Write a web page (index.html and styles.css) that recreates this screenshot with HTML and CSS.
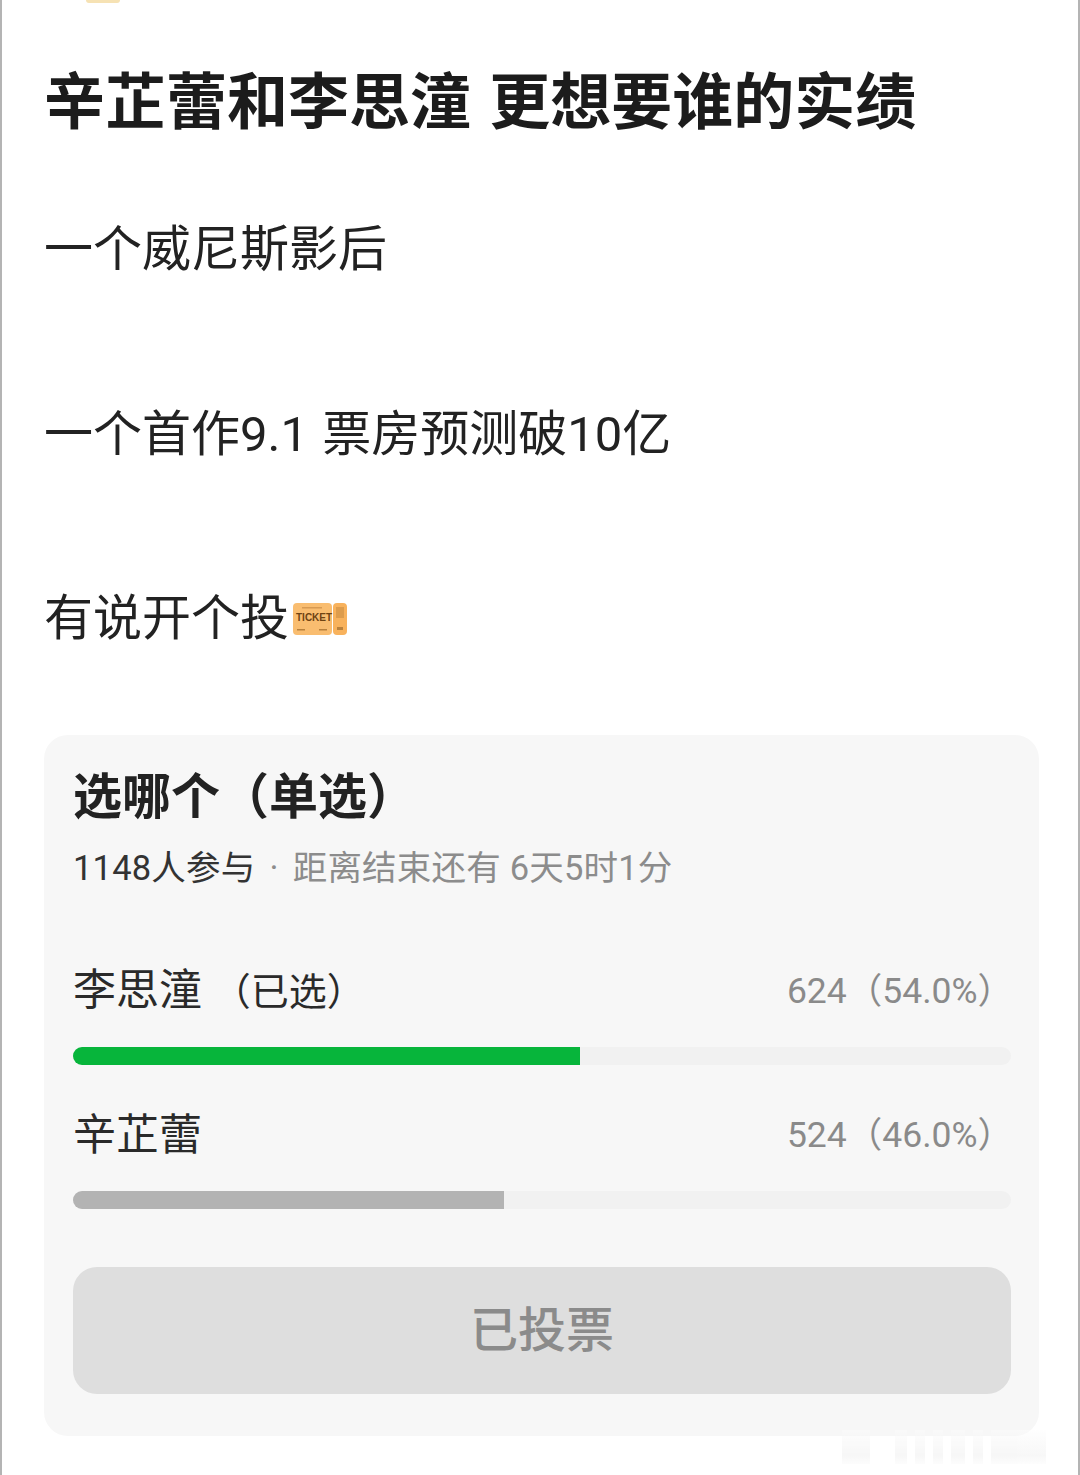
FILE: index.html
```html
<!DOCTYPE html>
<html lang="zh-CN">
<head>
    <meta charset="UTF-8">
    <meta name="viewport" content="width=device-width, initial-scale=1.0">
    <title>选哪个</title>
    <link rel="stylesheet" href="styles.css">
</head>
<body>
    <div class="page">
        <div class="avatar-edge"></div>
        <h1 class="post-title">辛芷蕾和李思潼 更想要谁的实绩</h1>
        <p class="post-line">一个威尼斯影后</p>
        <p class="post-line">一个首作9.1 票房预测破10亿</p>
        <p class="post-line">有说开个投<svg class="ticket" width="56" height="36" viewBox="0 0 56 36">
            <rect x="1" y="2" width="39" height="32" rx="4" fill="#f9bd70"/>
            <rect x="41" y="2" width="14" height="32" rx="4" fill="#f8b25c"/>
            <rect x="44" y="6" width="8" height="11" fill="#dd9c4c"/>
            <rect x="45" y="26" width="6" height="3" fill="#b9813c"/>
            <text x="4" y="20" class="ticket-text">TICKET</text>
            <rect x="10" y="6" width="20" height="1.5" fill="#d79a52"/>
            <rect x="5" y="28" width="8" height="1.5" fill="#b9813c"/>
            <rect x="27" y="28" width="8" height="1.5" fill="#b9813c"/>
        </svg></p>

        <div class="poll">
            <div class="poll-title">选哪个（单选）</div>
            <div class="poll-meta"><span class="poll-count">1148人参与</span><span class="poll-dot">·</span>距离结束还有 6天5时1分</div>

            <div class="option">
                <div class="option-head">
                    <span class="option-name">李思潼 <span class="option-mine">（已选）</span></span>
                    <span class="option-num">624（54.0%）</span>
                </div>
                <div class="track"><div class="fill fill-green" style="width: 54%"></div></div>
            </div>
            <div class="option">
                <div class="option-head">
                    <span class="option-name">辛芷蕾</span>
                    <span class="option-num">524（46.0%）</span>
                </div>
                <div class="track"><div class="fill fill-grey" style="width: 46%"></div></div>
            </div>

            <div class="vote-btn">已投票</div>
        </div>

        <div class="watermark">
            <i style="width: 28px"></i><i style="width: 12px; margin-left: 17px"></i><i style="width: 10px"></i><i style="width: 10px"></i><i style="width: 14px"></i><i style="width: 10px"></i><i style="width: 55px"></i>
        </div>
    </div>
</body>
</html>
```

FILE: styles.css
```css
* {
    box-sizing: border-box;
}
body {
    margin: 0;
    background: #fff;
    font-family: Roboto, "Noto Sans CJK SC", "Noto Sans", sans-serif;
    color: #222;
}
.page {
    position: relative;
    width: 1080px;
    height: 1475px;
    padding: 61px 39px 0 42px;
    border-left: 2px solid #b4b4b4;
    border-right: 2px solid #b4b4b4;
    overflow: hidden;
}
.avatar-edge {
    position: absolute;
    left: 84px;
    top: 0;
    width: 34px;
    height: 3px;
    background: #f6e2b4;
    border-radius: 0 0 18px 18px;
}
.post-title {
    margin: 0 0 69px;
    font-size: 61px;
    line-height: 84px;
    font-weight: 700;
    word-spacing: 3px;
    color: #1c1c1c;
    white-space: nowrap;
}
.post-line {
    margin: 0 0 112.5px;
    font-size: 49px;
    line-height: 72px;
    font-weight: 400;
    word-spacing: 2px;
    white-space: nowrap;
}
.post-line:last-of-type {
    margin-bottom: 80px;
    display: flex;
    align-items: center;
}
.ticket {
    margin: -1px 0 0 3px;
}
.ticket-text {
    font-family: "Liberation Sans", sans-serif;
    font-size: 10px;
    font-weight: 700;
    fill: #6e4312;
}
.poll {
    width: 995px;
    height: 701px;
    padding: 30px 28px 0 29px;
    background: #f7f7f7;
    border-radius: 24px;
}
.poll-title {
    font-size: 49px;
    line-height: 66px;
    font-weight: 700;
    color: #222;
}
.poll-meta {
    margin-top: 14px;
    font-size: 34.5px;
    line-height: 46px;
    letter-spacing: 0.2px;
    color: #8c8c8c;
    white-space: nowrap;
}
.poll-count {
    color: #333;
}
.poll-dot {
    margin: 0 14px;
}
.option {
    height: 144px;
}
.poll-meta + .option {
    margin-top: 67px;
}
.option-head {
    display: flex;
    justify-content: space-between;
    align-items: center;
    height: 60px;
    padding-top: 6px;
}
.option-name {
    font-size: 43px;
    line-height: 52px;
    color: #2a2a2a;
}
.option-mine {
    font-size: 38px;
}
.option-num {
    margin-right: -2px;
    font-size: 35.5px;
    line-height: 52px;
    color: #8a8a8a;
}
.track {
    margin-top: 29px;
    height: 18px;
    background: #f1f1f1;
    border-radius: 9px;
    overflow: hidden;
}
.fill {
    height: 100%;
}
.fill-green {
    background: #07b53b;
}
.fill-grey {
    background: #b3b3b3;
}
.vote-btn {
    margin-top: 21px;
    height: 127px;
    background: #dedede;
    border-radius: 24px;
    text-align: center;
    font-size: 48px;
    line-height: 127px;
    font-weight: 500;
    color: #8b8b8b;
}
/* blurred site watermark, lower right */
.watermark {
    position: absolute;
    left: 840px;
    top: 1430px;
    display: flex;
    gap: 8px;
    height: 34px;
    opacity: 0.4;
}
.watermark i {
    background: linear-gradient(#fdfdfd, #ececec 75%, #fafafa);
}
```
